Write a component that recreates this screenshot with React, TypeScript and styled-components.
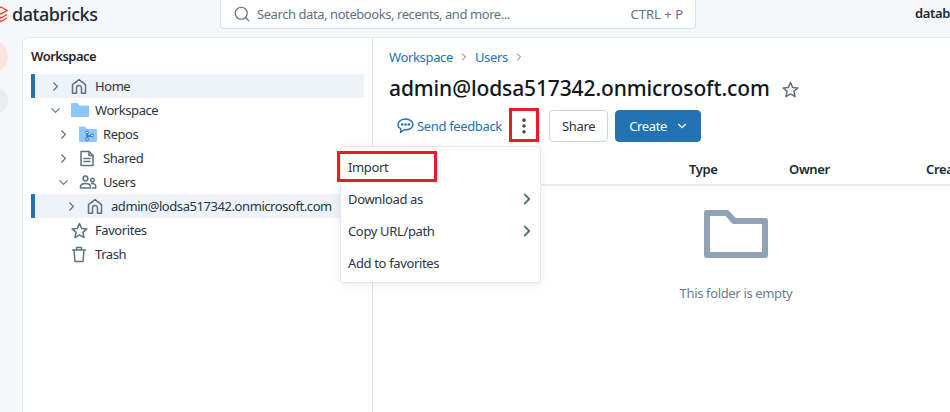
import React from "react";
import styled, { createGlobalStyle } from "styled-components";
import { ChevronRight, ChevronDown, Search, MoreVertical } from "lucide-react";

const GlobalStyle = createGlobalStyle`
  html, body { margin: 0; padding: 0; }
  body {
    width: 950px;
    height: 412px;
    overflow: hidden;
    background: #f6f7f9;
    font-family: "Noto Sans", "Open Sans", "Liberation Sans", sans-serif;
    letter-spacing: -0.35px;
    color: #1f272d;
  }
  * { box-sizing: border-box; }
`;

const Page = styled.div`
  position: relative;
  width: 950px;
  height: 412px;
  overflow: hidden;
  display: flex;
  flex-direction: column;
`;

const TopBar = styled.header`
  height: 37px;
  flex: none;
  display: flex;
  align-items: flex-start;
`;

const Logo = styled.div`
  width: 226px;
  height: 27px;
  flex: none;
  display: flex;
  align-items: center;
  gap: 4px;
  margin-left: -6px;
  font-size: 18px;
  font-weight: 500;
  letter-spacing: -0.45px;
  color: #1b2a33;
`;

const SearchBox = styled.div`
  width: 476px;
  height: 29px;
  flex: none;
  display: flex;
  align-items: center;
  padding: 0 12px;
  gap: 6px;
  background: #fff;
  border: 1px solid #d8dfe6;
  border-top: none;
  border-radius: 0 0 4px 4px;
  color: #5f7281;
  font-size: 13px;
  letter-spacing: -0.43px;
`;

const SearchHint = styled.span`
  flex: 1;
`;

const Shortcut = styled.span`
  letter-spacing: 0;
`;

const WorkspaceName = styled.div`
  margin-left: 219px;
  height: 27px;
  line-height: 27px;
  font-size: 13px;
  font-weight: 600;
  white-space: nowrap;
`;

const Body = styled.div`
  flex: 1;
  display: flex;
  min-height: 0;
`;

const Rail = styled.div`
  width: 22px;
  flex: none;
  display: flex;
  flex-direction: column;
  padding-top: 3px;
  gap: 14px;
`;

const RailDot = styled.div<{ $color: string; $size: number }>`
  width: ${(p) => p.$size}px;
  height: ${(p) => p.$size}px;
  flex: none;
  margin-left: ${(p) => 8 - p.$size}px;
  border-radius: 50%;
  background: ${(p) => p.$color};
`;

const Panel = styled.div`
  flex: 1;
  display: flex;
  background: #fff;
  border-top: 1px solid #e3e8ed;
  border-left: 1px solid #e3e8ed;
  border-top-left-radius: 6px;
`;

const Sidebar = styled.aside`
  width: 350px;
  flex: none;
  border-right: 1px solid #d8dfe6;
  padding: 9px 8px 0 8px;
`;

const SidebarTitle = styled.div`
  font-size: 13px;
  font-weight: 600;
  line-height: 18px;
  letter-spacing: -0.5px;
  margin-bottom: 9px;
`;

const TreeRow = styled.div<{ $depth: number; $active?: boolean }>`
  height: 24px;
  display: flex;
  align-items: center;
  padding-left: ${(p) => 13 + p.$depth * 8}px;
  font-size: 13px;
  letter-spacing: -0.43px;
  color: #2a3640;
  white-space: nowrap;
  background: ${(p) => (p.$active ? "#eef3f9" : "transparent")};
  border-left: 4px solid ${(p) => (p.$active ? "#2272b4" : "transparent")};
`;

const Caret = styled.span`
  width: 23px;
  flex: none;
  display: flex;
  align-items: center;
  color: #5f7281;
`;

const TreeIcon = styled.span`
  width: 24px;
  flex: none;
  display: flex;
  align-items: center;
  color: #5f7281;
`;

const Main = styled.main`
  flex: 1;
  min-width: 0;
  padding: 9px 0 0 16px;
`;

const Crumbs = styled.nav`
  display: flex;
  align-items: center;
  gap: 5px;
  height: 20px;
  font-size: 13px;
  color: #2272b4;
`;

const CrumbSep = styled.span`
  display: flex;
  color: #5f7281;
`;

const TitleRow = styled.div`
  margin-top: 5px;
  display: flex;
  align-items: center;
  gap: 12px;
  height: 32px;
`;

const Title = styled.h1`
  margin: 0;
  font-size: 21px;
  font-weight: 500;
  line-height: 32px;
  letter-spacing: -0.12px;
  color: #11171c;
  white-space: nowrap;
`;

const TitleStar = styled.span`
  display: flex;
  margin-top: 2px;
  color: #5f7281;
`;

const Actions = styled.div`
  margin-top: 6px;
  display: flex;
  align-items: center;
  height: 32px;
  padding-left: 8px;
`;

const Feedback = styled.a`
  display: flex;
  align-items: center;
  gap: 3px;
  font-size: 13px;
  color: #2272b4;
  width: 115px;
  white-space: nowrap;
`;

const MenuToggle = styled.div`
  width: 24px;
  height: 24px;
  display: flex;
  align-items: center;
  justify-content: center;
  color: #44535f;
  margin-right: 13px;
`;

const Button = styled.button<{ $primary?: boolean }>`
  height: 32px;
  display: flex;
  align-items: center;
  gap: 8px;
  padding: 0 ${(p) => (p.$primary ? "11px 0 13px" : "12px")};
  margin-right: 7px;
  border-radius: 4px;
  font: inherit;
  font-size: 13px;
  letter-spacing: -0.35px;
  border: 1px solid ${(p) => (p.$primary ? "#2272b4" : "#cbd5dd")};
  background: ${(p) => (p.$primary ? "#2272b4" : "#fff")};
  color: ${(p) => (p.$primary ? "#fff" : "#2a3640")};
`;

const TableHead = styled.div`
  margin: 12px 0 0 -16px;
  height: 32px;
  display: grid;
  grid-template-columns: 316px 100px 137px 1fr;
  align-items: center;
  border-bottom: 2px solid #e8ecf0;
  font-size: 13px;
  font-weight: 600;
  color: #1b2a33;
  white-space: nowrap;
`;

const Empty = styled.div`
  margin: 24px 0 0 187px;
  width: 320px;
  display: flex;
  flex-direction: column;
  align-items: center;
  gap: 26px;
  font-size: 13px;
  color: #6b7d8a;
`;

const Menu = styled.div`
  position: absolute;
  left: 340px;
  top: 146px;
  width: 201px;
  height: 137px;
  padding: 4px 0;
  background: #fff;
  border: 1px solid #e3e8ed;
  border-radius: 4px;
  box-shadow: 0 2px 8px rgba(0, 0, 0, 0.08);
`;

const MenuItem = styled.div`
  height: 32px;
  display: flex;
  align-items: center;
  justify-content: space-between;
  padding: 0 4px 0 7px;
  font-size: 13px;
  color: #2a3640;
`;

const MenuCaret = styled.span`
  display: flex;
  color: #5a6f80;
`;

const Highlight = styled.div<{ $x: number; $y: number; $w: number; $h: number }>`
  position: absolute;
  left: ${(p) => p.$x}px;
  top: ${(p) => p.$y}px;
  width: ${(p) => p.$w}px;
  height: ${(p) => p.$h}px;
  border: 3px solid #ed1c24;
  pointer-events: none;
`;

const BrandMark = () => (
  <svg width="14" height="18" viewBox="0 0 14 18" fill="none" stroke="#ff3621" strokeWidth="1.4">
    <path d="M1 5.5 7 2l6 3.5L7 9 1 5.5Z" />
    <path d="M1 9.5 7 13l6-3.5" />
    <path d="M1 13 7 16.5 13 13" />
  </svg>
);

const LineIcon = ({ w = 16, h = 17, children }: { w?: number; h?: number; children: React.ReactNode }) => (
  <svg width={w} height={h} viewBox={`0 0 ${w} ${h}`} fill="none" stroke="currentColor" strokeWidth="1.5" strokeLinecap="round" strokeLinejoin="round">
    {children}
  </svg>
);

const HouseIcon = () => (
  <LineIcon>
    <path d="M1.5 6.6 8 1.6l6.5 5V15.2h-4V10a2.5 2.5 0 0 0-5 0v5.2h-4V6.6Z" />
  </LineIcon>
);

const SharedIcon = () => (
  <LineIcon>
    <path d="M2 1.5h8l4 4v10H2v-14Z" />
    <path d="M10 1.5v4h4M5 8.5h6M5 11.5h6" />
  </LineIcon>
);

const UsersIcon = () => (
  <LineIcon w={18}>
    <circle cx="6.5" cy="4.5" r="2.4" />
    <circle cx="13.5" cy="6" r="1.8" />
    <path d="M1.5 14v-1.2c0-2 2-3.3 5-3.3s5 1.3 5 3.3V14h-10ZM12.5 9.6c2.4-.3 4.2.8 4.2 2.6V14h-3" />
  </LineIcon>
);

const StarIcon = () => (
  <LineIcon w={17}>
    <path d="m8.5 1.5 2.1 4.9 5.3.5-4 3.5 1.2 5.2-4.6-2.7-4.6 2.7 1.2-5.2-4-3.5 5.3-.5 2.1-4.9Z" />
  </LineIcon>
);

const TrashIcon = () => (
  <LineIcon>
    <path d="M1.5 4h13M5.5 4V1.5h5V4M3 4l1 11.5h8L13 4" />
  </LineIcon>
);

const SolidFolder = () => (
  <svg width="18" height="14" viewBox="0 0 18 14">
    <path d="M0 1a1 1 0 0 1 1-1h5.5l2 2.5H17a1 1 0 0 1 1 1V13a1 1 0 0 1-1 1H1a1 1 0 0 1-1-1V1Z" fill="#8fc6fb" />
  </svg>
);

const ReposFolder = () => (
  <svg width="18" height="16" viewBox="0 0 18 16">
    <path d="M0 1.5a1 1 0 0 1 1-1h5l2 2.5h9a1 1 0 0 1 1 1V15a1 1 0 0 1-1 1H1a1 1 0 0 1-1-1V1.5Z" fill="#8fc6fb" />
    <path d="M8 7.5v5M8 10h4" stroke="#2272b4" strokeWidth="1.3" fill="none" />
    <circle cx="8" cy="6.5" r="1.4" fill="#fff" stroke="#2272b4" />
    <circle cx="8" cy="13" r="1.4" fill="#fff" stroke="#2272b4" />
    <circle cx="13" cy="9.5" r="1.4" fill="#fff" stroke="#2272b4" />
  </svg>
);

const FeedbackIcon = () => (
  <svg width="17" height="16" viewBox="0 0 17 16" fill="none" stroke="currentColor" strokeWidth="1.4" strokeLinejoin="round">
    <path d="M8.5 1C4.4 1 1 3.4 1 6.6c0 1.9 1.2 3.5 3 4.5l-.5 3.4 3.6-2.7h1.4c4.1 0 7.5-2.2 7.5-5.2S12.6 1 8.5 1Z" />
    <circle cx="5.2" cy="6.5" r=".6" fill="currentColor" />
    <circle cx="8.5" cy="6.5" r=".6" fill="currentColor" />
    <circle cx="11.8" cy="6.5" r=".6" fill="currentColor" />
  </svg>
);

const BigFolder = () => (
  <svg width="64" height="48" viewBox="0 0 64 48" fill="none">
    <path d="M3 3h20l7 8h31v34H3V3Z" stroke="#8fa3b5" strokeWidth="6" strokeLinejoin="round" />
  </svg>
);

const Closed = () => <ChevronRight size={15} strokeWidth={1.8} />;
const Open = () => <ChevronDown size={15} strokeWidth={1.8} />;

export default function App() {
  return (
    <Page>
      <GlobalStyle />
      <TopBar>
        <Logo>
          <BrandMark />
          databricks
        </Logo>
        <SearchBox>
          <Search size={18} strokeWidth={1.6} />
          <SearchHint>Search data, notebooks, recents, and more...</SearchHint>
          <Shortcut>CTRL + P</Shortcut>
        </SearchBox>
        <WorkspaceName>databricks</WorkspaceName>
      </TopBar>
      <Body>
        <Rail>
          <RailDot $color="#fbe3e1" $size={33} />
          <RailDot $color="#e8edf3" $size={27} />
        </Rail>
        <Panel>
          <Sidebar>
            <SidebarTitle>Workspace</SidebarTitle>
            <TreeRow $depth={0} $active>
              <Caret><Closed /></Caret>
              <TreeIcon><HouseIcon /></TreeIcon>
              Home
            </TreeRow>
            <TreeRow $depth={0}>
              <Caret><Open /></Caret>
              <TreeIcon><SolidFolder /></TreeIcon>
              Workspace
            </TreeRow>
            <TreeRow $depth={1}>
              <Caret><Closed /></Caret>
              <TreeIcon><ReposFolder /></TreeIcon>
              Repos
            </TreeRow>
            <TreeRow $depth={1}>
              <Caret><Closed /></Caret>
              <TreeIcon><SharedIcon /></TreeIcon>
              Shared
            </TreeRow>
            <TreeRow $depth={1}>
              <Caret><Open /></Caret>
              <TreeIcon><UsersIcon /></TreeIcon>
              Users
            </TreeRow>
            <TreeRow $depth={2} $active>
              <Caret><Closed /></Caret>
              <TreeIcon><HouseIcon /></TreeIcon>
              admin@lodsa517342.onmicrosoft.com
            </TreeRow>
            <TreeRow $depth={0}>
              <Caret />
              <TreeIcon><StarIcon /></TreeIcon>
              Favorites
            </TreeRow>
            <TreeRow $depth={0}>
              <Caret />
              <TreeIcon><TrashIcon /></TreeIcon>
              Trash
            </TreeRow>
          </Sidebar>
          <Main>
            <Crumbs>
              Workspace
              <CrumbSep><ChevronRight size={12} /></CrumbSep>
              Users
              <CrumbSep><ChevronRight size={12} /></CrumbSep>
            </Crumbs>
            <TitleRow>
              <Title>admin@lodsa517342.onmicrosoft.com</Title>
              <TitleStar><StarIcon /></TitleStar>
            </TitleRow>
            <Actions>
              <Feedback>
                <FeedbackIcon />
                Send feedback
              </Feedback>
              <MenuToggle><MoreVertical size={20} strokeWidth={2.4} /></MenuToggle>
              <Button>Share</Button>
              <Button $primary>
                Create
                <ChevronDown size={14} strokeWidth={2} />
              </Button>
            </Actions>
            <TableHead>
              <span />
              <span>Type</span>
              <span>Owner</span>
              <span>Created at</span>
            </TableHead>
            <Empty>
              <BigFolder />
              This folder is empty
            </Empty>
          </Main>
        </Panel>
      </Body>
      <Menu>
        <MenuItem>Import</MenuItem>
        <MenuItem>Download as<MenuCaret><ChevronRight size={18} strokeWidth={2.4} /></MenuCaret></MenuItem>
        <MenuItem>Copy URL/path<MenuCaret><ChevronRight size={18} strokeWidth={2.4} /></MenuCaret></MenuItem>
        <MenuItem>Add to favorites</MenuItem>
      </Menu>
      <Highlight $x={337} $y={151} $w={100} $h={31} />
      <Highlight $x={509} $y={108} $w={30} $h={34} />
    </Page>
  );
}
